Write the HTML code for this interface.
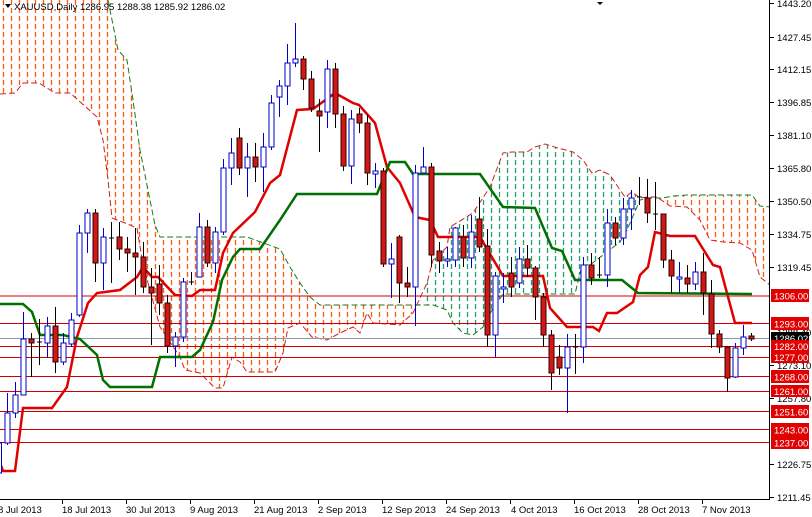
<!DOCTYPE html>
<html><head><meta charset="utf-8"><style>
html,body{margin:0;padding:0;background:#fff;}
svg{display:block;font-family:"Liberation Sans",sans-serif;}
</style></head><body>
<svg width="812" height="517" viewBox="0 0 812 517" xmlns="http://www.w3.org/2000/svg">
<defs>
<clipPath id="c1"><polygon points="0,0 108,0 118,50 127,60 133,100 140,150 155,225 160,237 247,237 280,249 290,267 300,283 310,297 320,305 418,305 413,313 400,325 373,323 367,313 360,333 353,327 340,333 327,340 312,337 300,323 288,328 283,353 275,372 247,372 240,362 232,357 223,388 215,388 210,383 200,373 185,370 180,357 160,327 150,290 143,265 137,228 125,223 112,218 108,180 103,140 97,117 87,108 70,93 55,93 39,83 23,83 15,93 0,94"/></clipPath>
<clipPath id="c2"><polygon points="418,305 427,283 433,260 447,247 450,227 473,213 490,187 503,153 512,152 527,152 535,147 545,144 558,148 573,152 583,160 592,173 600,170 610,175 618,187 625,197 632,192 640,199 627,230 620,242 590,265 582,265 575,294 503,294 492,310 483,327 473,335 463,333 453,323 447,310 433,305"/></clipPath>
<clipPath id="c3"><polygon points="640,199 648,198 663,198 673,196 687,195 752,195 760,206 770,207 770,285 760,277 752,250 740,243 723,242 710,240 700,220 687,207 670,206 657,197 648,197"/></clipPath>
<clipPath id="cc"><rect x="0" y="0" width="769" height="500"/></clipPath>
</defs>
<rect width="812" height="517" fill="#fff"/>
<g clip-path="url(#cc)">
<g clip-path="url(#c1)"><path fill="none" stroke="#ff5a10" stroke-width="1.3" stroke-dasharray="5,3" d="M3.5 0V500M11.5 0V500M19.5 0V500M27.5 0V500M35.5 0V500M43.5 0V500M51.5 0V500M59.5 0V500M67.5 0V500M75.5 0V500M83.5 0V500M91.5 0V500M99.5 0V500M107.5 0V500M115.5 0V500M123.5 0V500M131.5 0V500M139.5 0V500M147.5 0V500M155.5 0V500M163.5 0V500M171.5 0V500M179.5 0V500M187.5 0V500M195.5 0V500M203.5 0V500M211.5 0V500M219.5 0V500M227.5 0V500M235.5 0V500M243.5 0V500M251.5 0V500M259.5 0V500M267.5 0V500M275.5 0V500M283.5 0V500M291.5 0V500M299.5 0V500M307.5 0V500M315.5 0V500M323.5 0V500M331.5 0V500M339.5 0V500M347.5 0V500M355.5 0V500M363.5 0V500M371.5 0V500M379.5 0V500M387.5 0V500M395.5 0V500M403.5 0V500M411.5 0V500M419.5 0V500"/></g>
<g clip-path="url(#c2)"><path fill="none" stroke="#20a070" stroke-width="1.3" stroke-dasharray="5,3" d="M419.5 0V500M427.5 0V500M435.5 0V500M443.5 0V500M451.5 0V500M459.5 0V500M467.5 0V500M475.5 0V500M483.5 0V500M491.5 0V500M499.5 0V500M507.5 0V500M515.5 0V500M523.5 0V500M531.5 0V500M539.5 0V500M547.5 0V500M555.5 0V500M563.5 0V500M571.5 0V500M579.5 0V500M587.5 0V500M595.5 0V500M603.5 0V500M611.5 0V500M619.5 0V500M627.5 0V500M635.5 0V500M643.5 0V500"/></g>
<g clip-path="url(#c3)"><path fill="none" stroke="#ff5a10" stroke-width="1.3" stroke-dasharray="5,3" d="M643.5 0V500M651.5 0V500M659.5 0V500M667.5 0V500M675.5 0V500M683.5 0V500M691.5 0V500M699.5 0V500M707.5 0V500M715.5 0V500M723.5 0V500M731.5 0V500M739.5 0V500M747.5 0V500M755.5 0V500M763.5 0V500"/></g>
<polyline fill="none" stroke="#d02020" stroke-width="1" stroke-dasharray="6,3" points="0,94 15,93 23,83 39,83 55,93 70,93 87,108 97,117 103,140 108,180 112,218 125,223 137,228 143,265 150,290 160,327 180,357 185,370 200,373 210,383 215,388 223,388 232,357 240,362 247,372 275,372 283,353 288,328 300,323 312,337 327,340 340,333 353,327 360,333 367,313 373,323 400,325 413,313 427,283 433,260 447,247 450,227 473,213 490,187 503,153 512,152 527,152 535,147 545,144 558,148 573,152 583,160 592,173 600,170 610,175 618,187 625,197 632,192 640,198 648,197 657,197 670,206 687,207 700,220 710,240 723,242 740,243 752,250 760,277 770,285"/>
<polyline fill="none" stroke="#1a7a1a" stroke-width="1" stroke-dasharray="6,3" points="108,0 118,50 127,60 133,100 140,150 155,225 160,237 247,237 280,249 290,267 300,283 310,297 320,305 433,305 447,310 453,323 463,333 473,335 483,327 492,310 503,294 575,294 582,265 590,265 620,242 627,230 640,200 648,198 663,198 673,196 687,195 752,195 760,206 770,207"/>
<g stroke="#d00000" stroke-width="1">
<line x1="0" y1="296" x2="770" y2="296"/><line x1="0" y1="323.5" x2="770" y2="323.5"/><line x1="0" y1="346.5" x2="770" y2="346.5"/><line x1="0" y1="357.5" x2="770" y2="357.5"/><line x1="0" y1="376.5" x2="770" y2="376.5"/><line x1="0" y1="391.5" x2="770" y2="391.5"/><line x1="0" y1="411.5" x2="770" y2="411.5"/><line x1="0" y1="429.5" x2="770" y2="429.5"/><line x1="0" y1="442.5" x2="770" y2="442.5"/>
</g>
<line x1="0" y1="338.5" x2="770" y2="338.5" stroke="#8899aa" stroke-width="1"/>
<polyline fill="none" stroke="#e00000" stroke-width="2.5" points="0,463 3,471 15,471 23,408 52,408 67,387 77,337 88,303 97,293 120,290 137,277 143,267 152,277 158,277 175,295 192,296 200,290 215,290 223,253 233,233 255,212 270,183 280,175 297,110 313,109 335,93 353,103 359,105 375,123 387,167 400,183 415,217 430,220 438,237 480,237 503,276 543,276 550,308 567,327 593,327 599,331 607,313 617,313 633,302 640,275 648,267 655,232 670,236 695,236 713,265 720,267 735,323 752,323"/>
<polyline fill="none" stroke="#007000" stroke-width="2.5" points="0,304 23,304 32,312 40,335 63,335 80,339 97,355 103,380 110,387 152,387 160,357 192,357 200,350 213,322 222,280 233,257 240,249 260,249 280,220 297,194 377,194 390,162 405,162 413,174 480,174 503,207 535,208 552,248 562,251 575,280 622,280 638,293 752,294"/>
<g stroke-width="1">
<g stroke="#0000c8"><line x1="-1" y1="430" x2="-1" y2="478"/><rect x="-3.5" y="443" width="5" height="30" fill="#fff"/></g>
<g stroke="#0000c8"><line x1="7.5" y1="393" x2="7.5" y2="445"/><rect x="5" y="413" width="5" height="30" fill="#fff"/>
<line x1="15.5" y1="382" x2="15.5" y2="418"/><rect x="13" y="395" width="5" height="18" fill="#fff"/>
<line x1="23.5" y1="312" x2="23.5" y2="395"/><rect x="21" y="339" width="5" height="56" fill="#fff"/>
<line x1="47.5" y1="317" x2="47.5" y2="358"/><rect x="45" y="326" width="5" height="17" fill="#fff"/>
<line x1="63.5" y1="333" x2="63.5" y2="365"/><rect x="61" y="343" width="5" height="19" fill="#fff"/>
<line x1="71.5" y1="313" x2="71.5" y2="347"/><rect x="69" y="320" width="5" height="24" fill="#fff"/>
<line x1="79.5" y1="225" x2="79.5" y2="317"/><rect x="77" y="233" width="5" height="82" fill="#fff"/>
<line x1="87.5" y1="209" x2="87.5" y2="253"/><rect x="85" y="213" width="5" height="20" fill="#fff"/>
<line x1="103.5" y1="228" x2="103.5" y2="290"/><rect x="101" y="237" width="5" height="26" fill="#fff"/>
<line x1="175.5" y1="332" x2="175.5" y2="367"/><rect x="173" y="337" width="5" height="9" fill="#fff"/>
<line x1="183.5" y1="278" x2="183.5" y2="342"/><rect x="181" y="282" width="5" height="55" fill="#fff"/>
<line x1="199.5" y1="213" x2="199.5" y2="277"/><rect x="197" y="227" width="5" height="50" fill="#fff"/>
<line x1="215.5" y1="227" x2="215.5" y2="273"/><rect x="213" y="232" width="5" height="31" fill="#fff"/>
<line x1="223.5" y1="159" x2="223.5" y2="235"/><rect x="221" y="168" width="5" height="64" fill="#fff"/>
<line x1="231.5" y1="138" x2="231.5" y2="185"/><rect x="229" y="153" width="5" height="15" fill="#fff"/>
<line x1="247.5" y1="143" x2="247.5" y2="197"/><rect x="245" y="157" width="5" height="11" fill="#fff"/>
<line x1="263.5" y1="133" x2="263.5" y2="192"/><rect x="261" y="147" width="5" height="20" fill="#fff"/>
<line x1="271.5" y1="95" x2="271.5" y2="150"/><rect x="269" y="103" width="5" height="44" fill="#fff"/>
<line x1="279.5" y1="80" x2="279.5" y2="117"/><rect x="277" y="86" width="5" height="11" fill="#fff"/>
<line x1="287.5" y1="44" x2="287.5" y2="105"/><rect x="285" y="63" width="5" height="23" fill="#fff"/>
<line x1="295.5" y1="23" x2="295.5" y2="67"/><rect x="293" y="59" width="5" height="4" fill="#fff"/>
<line x1="327.5" y1="60" x2="327.5" y2="128"/><rect x="325" y="69" width="5" height="43" fill="#fff"/>
<line x1="351.5" y1="110" x2="351.5" y2="184"/><rect x="349" y="119" width="5" height="47" fill="#fff"/>
<line x1="375.5" y1="163" x2="375.5" y2="188"/><rect x="373" y="171" width="5" height="3" fill="#fff"/>
<line x1="391.5" y1="243" x2="391.5" y2="298"/><rect x="389" y="259" width="5" height="5" fill="#fff"/>
<line x1="415.5" y1="165" x2="415.5" y2="326"/><rect x="413" y="173" width="5" height="114" fill="#fff"/>
<line x1="423.5" y1="147" x2="423.5" y2="173"/><rect x="421" y="167" width="5" height="6" fill="#fff"/>
<line x1="447.5" y1="247" x2="447.5" y2="267"/><rect x="445" y="259" width="5" height="2" fill="#fff"/>
<line x1="455.5" y1="227" x2="455.5" y2="267"/><rect x="453" y="228" width="5" height="32" fill="#fff"/>
<line x1="471.5" y1="215" x2="471.5" y2="268"/><rect x="469" y="232" width="5" height="26" fill="#fff"/>
<line x1="495.5" y1="272" x2="495.5" y2="357"/><rect x="493" y="276" width="5" height="59" fill="#fff"/>
<line x1="503.5" y1="273" x2="503.5" y2="303"/><rect x="501" y="287" width="5" height="2" fill="#fff"/>
<line x1="519.5" y1="247" x2="519.5" y2="288"/><rect x="517" y="259" width="5" height="24" fill="#fff"/>
<line x1="567.5" y1="334" x2="567.5" y2="413"/><rect x="565" y="347" width="5" height="21" fill="#fff"/>
<line x1="583.5" y1="257" x2="583.5" y2="363"/><rect x="581" y="265" width="5" height="82" fill="#fff"/>
<line x1="607.5" y1="209" x2="607.5" y2="287"/><rect x="605" y="223" width="5" height="52" fill="#fff"/>
<line x1="623.5" y1="198" x2="623.5" y2="245"/><rect x="621" y="209" width="5" height="29" fill="#fff"/>
<line x1="631.5" y1="190" x2="631.5" y2="230"/><rect x="629" y="198" width="5" height="11" fill="#fff"/>
<line x1="679.5" y1="262" x2="679.5" y2="293"/><rect x="677" y="277" width="5" height="2" fill="#fff"/>
<line x1="695.5" y1="262" x2="695.5" y2="290"/><rect x="693" y="272" width="5" height="12" fill="#fff"/>
<line x1="735.5" y1="343" x2="735.5" y2="378"/><rect x="733" y="348" width="5" height="29" fill="#fff"/>
<line x1="743.5" y1="325" x2="743.5" y2="355"/><rect x="741" y="337" width="5" height="11" fill="#fff"/>
</g>
<g stroke="#000"><line x1="39.5" y1="319" x2="39.5" y2="365"/><line x1="37" y1="342" x2="42" y2="342"/>
<line x1="111.5" y1="222" x2="111.5" y2="283"/><line x1="109" y1="238" x2="114" y2="238"/>
<line x1="191.5" y1="272" x2="191.5" y2="285"/><line x1="189" y1="282" x2="194" y2="282"/>
<line x1="575.5" y1="334" x2="575.5" y2="374"/><line x1="573" y1="347" x2="578" y2="347"/>
<line x1="599.5" y1="257" x2="599.5" y2="278"/><line x1="597" y1="275" x2="602" y2="275"/>
<line x1="639.5" y1="177" x2="639.5" y2="205"/><line x1="637" y1="197" x2="642" y2="197"/>
<line x1="655.5" y1="182" x2="655.5" y2="230"/><line x1="653" y1="214" x2="658" y2="214"/>
</g>
<g stroke="#000"><line x1="31.5" y1="333" x2="31.5" y2="377"/><line x1="55.5" y1="307" x2="55.5" y2="373"/><line x1="95.5" y1="209" x2="95.5" y2="282"/><line x1="119.5" y1="222" x2="119.5" y2="260"/><line x1="127.5" y1="237" x2="127.5" y2="272"/><line x1="135.5" y1="228" x2="135.5" y2="295"/><line x1="143.5" y1="242" x2="143.5" y2="293"/><line x1="151.5" y1="268" x2="151.5" y2="345"/><line x1="159.5" y1="265" x2="159.5" y2="315"/><line x1="167.5" y1="295" x2="167.5" y2="353"/><line x1="207.5" y1="220" x2="207.5" y2="267"/><line x1="239.5" y1="128" x2="239.5" y2="175"/><line x1="255.5" y1="143" x2="255.5" y2="182"/><line x1="303.5" y1="56" x2="303.5" y2="90"/><line x1="311.5" y1="71" x2="311.5" y2="112"/><line x1="319.5" y1="99" x2="319.5" y2="152"/><line x1="335.5" y1="63" x2="335.5" y2="128"/><line x1="343.5" y1="106" x2="343.5" y2="171"/><line x1="359.5" y1="108" x2="359.5" y2="133"/><line x1="367.5" y1="115" x2="367.5" y2="185"/><line x1="383.5" y1="168" x2="383.5" y2="267"/><line x1="399.5" y1="235" x2="399.5" y2="303"/><line x1="407.5" y1="267" x2="407.5" y2="297"/><line x1="431.5" y1="163" x2="431.5" y2="267"/><line x1="439.5" y1="242" x2="439.5" y2="273"/><line x1="463.5" y1="225" x2="463.5" y2="267"/><line x1="479.5" y1="197" x2="479.5" y2="252"/><line x1="487.5" y1="229" x2="487.5" y2="347"/><line x1="511.5" y1="257" x2="511.5" y2="297"/><line x1="527.5" y1="245" x2="527.5" y2="277"/><line x1="535.5" y1="266" x2="535.5" y2="320"/><line x1="543.5" y1="293" x2="543.5" y2="347"/><line x1="551.5" y1="330" x2="551.5" y2="390"/><line x1="559.5" y1="345" x2="559.5" y2="375"/><line x1="591.5" y1="253" x2="591.5" y2="285"/><line x1="615.5" y1="217" x2="615.5" y2="245"/><line x1="647.5" y1="179" x2="647.5" y2="223"/><line x1="663.5" y1="214" x2="663.5" y2="268"/><line x1="671.5" y1="250" x2="671.5" y2="293"/><line x1="687.5" y1="265" x2="687.5" y2="293"/><line x1="703.5" y1="253" x2="703.5" y2="315"/><line x1="711.5" y1="280" x2="711.5" y2="348"/><line x1="719.5" y1="330" x2="719.5" y2="353"/><line x1="727.5" y1="346" x2="727.5" y2="392"/><line x1="751.5" y1="333" x2="751.5" y2="341"/></g>
<g fill="#d01818" stroke="#300">
<rect x="29" y="339" width="5" height="4"/><rect x="53" y="326" width="5" height="36"/><rect x="93" y="213" width="5" height="50"/><rect x="117" y="237" width="5" height="12"/><rect x="125" y="249" width="5" height="4"/><rect x="133" y="253" width="5" height="4"/><rect x="141" y="257" width="5" height="30"/><rect x="149" y="287" width="5" height="6"/><rect x="157" y="284" width="5" height="19"/><rect x="165" y="303" width="5" height="43"/><rect x="205" y="227" width="5" height="36"/><rect x="237" y="138" width="5" height="30"/><rect x="253" y="157" width="5" height="10"/><rect x="301" y="59" width="5" height="20"/><rect x="309" y="79" width="5" height="29"/><rect x="317" y="111" width="5" height="5"/><rect x="333" y="69" width="5" height="45"/><rect x="341" y="114" width="5" height="52"/><rect x="357" y="114" width="5" height="9"/><rect x="365" y="123" width="5" height="50"/><rect x="381" y="171" width="5" height="93"/><rect x="397" y="237" width="5" height="46"/><rect x="405" y="283" width="5" height="4"/><rect x="429" y="167" width="5" height="88"/><rect x="437" y="251" width="5" height="10"/><rect x="461" y="237" width="5" height="21"/><rect x="477" y="219" width="5" height="28"/><rect x="485" y="246" width="5" height="89"/><rect x="509" y="273" width="5" height="14"/><rect x="525" y="259" width="5" height="9"/><rect x="533" y="268" width="5" height="29"/><rect x="541" y="297" width="5" height="38"/><rect x="549" y="335" width="5" height="38"/><rect x="557" y="357" width="5" height="11"/><rect x="589" y="265" width="5" height="13"/><rect x="613" y="223" width="5" height="15"/><rect x="645" y="198" width="5" height="15"/><rect x="661" y="214" width="5" height="46"/><rect x="669" y="260" width="5" height="16"/><rect x="685" y="278" width="5" height="6"/><rect x="701" y="272" width="5" height="21"/><rect x="709" y="294" width="5" height="40"/><rect x="717" y="334" width="5" height="13"/><rect x="725" y="347" width="5" height="31"/><rect x="749" y="336" width="5" height="3"/>
</g>
</g>
</g>
<line x1="769.5" y1="0" x2="769.5" y2="500" stroke="#000"/>
<line x1="0" y1="499.5" x2="770" y2="499.5" stroke="#000"/>
<polygon points="5,4 11,4 8,8" fill="#000"/>
<text x="14" y="10" font-size="9.5" fill="#000">XAUUSD,Daily  1286.95 1288.38 1285.92 1286.02</text>
<polygon points="597,2 603,2 600,5" fill="#000"/>
<g font-size="9.5" fill="#000">
<g stroke="#000"><line x1="770" y1="3.5" x2="774" y2="3.5"/><line x1="770" y1="37.5" x2="774" y2="37.5"/><line x1="770" y1="69.5" x2="774" y2="69.5"/><line x1="770" y1="102.5" x2="774" y2="102.5"/><line x1="770" y1="135.5" x2="774" y2="135.5"/><line x1="770" y1="168.5" x2="774" y2="168.5"/><line x1="770" y1="201.5" x2="774" y2="201.5"/><line x1="770" y1="234.5" x2="774" y2="234.5"/><line x1="770" y1="267.5" x2="774" y2="267.5"/><line x1="770" y1="365.5" x2="774" y2="365.5"/><line x1="770" y1="398.5" x2="774" y2="398.5"/><line x1="770" y1="464.5" x2="774" y2="464.5"/><line x1="770" y1="497.5" x2="774" y2="497.5"/></g>
<text x="777" y="7">1443.20</text><text x="777" y="41">1427.45</text><text x="777" y="73">1412.15</text><text x="777" y="106">1396.85</text><text x="777" y="139">1381.10</text><text x="777" y="172">1365.80</text><text x="777" y="205">1350.50</text><text x="777" y="238">1334.75</text><text x="777" y="271">1319.45</text><text x="777" y="369">1273.10</text><text x="777" y="402">1257.80</text><text x="777" y="468">1226.75</text><text x="777" y="501">1211.45</text>
<text x="777" y="336">1288.40</text>
</g>
<g font-size="9.5" fill="#fff">
<rect x="771" y="289" width="38" height="13" fill="#e00000"/><text x="774" y="299.5">1306.00</text>
<rect x="771" y="317" width="38" height="13" fill="#e00000"/><text x="774" y="327.5">1293.00</text>
<rect x="771" y="332" width="38" height="12" fill="#000"/><text x="774" y="342">1286.02</text>
<rect x="771" y="340" width="38" height="12" fill="#e00000"/><text x="774" y="350">1282.00</text>
<rect x="771" y="351" width="38" height="12" fill="#e00000"/><text x="774" y="361">1277.00</text>
<rect x="771" y="370" width="38" height="13" fill="#e00000"/><text x="774" y="380.5">1268.00</text>
<rect x="771" y="385" width="38" height="12" fill="#e00000"/><text x="774" y="395">1261.00</text>
<rect x="771" y="405" width="38" height="13" fill="#e00000"/><text x="774" y="415.5">1251.60</text>
<rect x="771" y="423" width="38" height="13" fill="#e00000"/><text x="774" y="433.5">1243.00</text>
<rect x="771" y="436" width="38" height="13" fill="#e00000"/><text x="774" y="446.5">1237.00</text>
</g>
<g font-size="9.5" fill="#000">
<g stroke="#000"><line x1="-0.5" y1="500" x2="-0.5" y2="504"/><line x1="62.5" y1="500" x2="62.5" y2="504"/><line x1="126.5" y1="500" x2="126.5" y2="504"/><line x1="190.5" y1="500" x2="190.5" y2="504"/><line x1="254.5" y1="500" x2="254.5" y2="504"/><line x1="318.5" y1="500" x2="318.5" y2="504"/><line x1="382.5" y1="500" x2="382.5" y2="504"/><line x1="446.5" y1="500" x2="446.5" y2="504"/><line x1="510.5" y1="500" x2="510.5" y2="504"/><line x1="574.5" y1="500" x2="574.5" y2="504"/><line x1="638.5" y1="500" x2="638.5" y2="504"/><line x1="702.5" y1="500" x2="702.5" y2="504"/></g>
<text x="-2" y="513">8 Jul 2013</text><text x="62" y="513">18 Jul 2013</text><text x="126" y="513">30 Jul 2013</text><text x="190" y="513">9 Aug 2013</text><text x="254" y="513">21 Aug 2013</text><text x="318" y="513">2 Sep 2013</text><text x="382" y="513">12 Sep 2013</text><text x="446" y="513">24 Sep 2013</text><text x="511" y="513">4 Oct 2013</text><text x="574" y="513">16 Oct 2013</text><text x="638" y="513">28 Oct 2013</text><text x="702" y="513">7 Nov 2013</text>
</g>
</svg>
</body></html>
